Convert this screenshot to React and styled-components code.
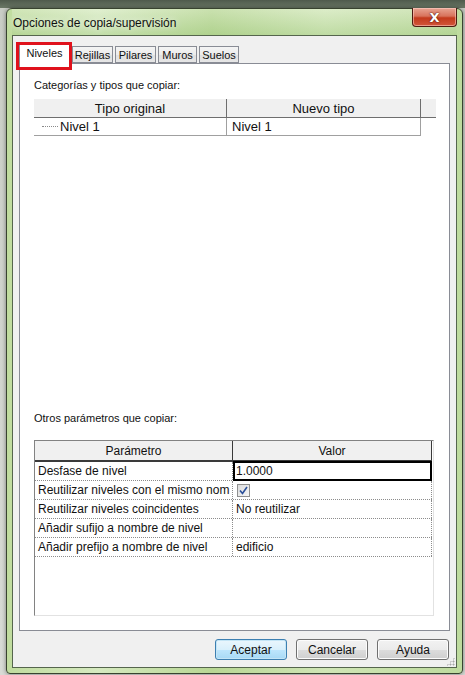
import React from 'react';
import styled, { createGlobalStyle } from 'styled-components';

const GlobalStyle = createGlobalStyle`
  html, body {
    margin: 0;
    padding: 0;
    height: 675px;
    overflow: hidden;
  }
  body {
    background: linear-gradient(180deg, #4f5a4c 0, #6b7866 8px, #c9cdc5 8px, #d8dbd5 100%);
    font-family: "Liberation Sans", Arial, sans-serif;
    font-size: 12px;
    color: #111;
  }
`;

const Page = styled.div`
  padding: 8px 2px 0 6px;
`;

const Window = styled.div`
  width: 457px;
  height: 666px;
  box-sizing: border-box;
  border: 1px solid #38432f;
  border-radius: 6px 6px 4px 4px;
  background: linear-gradient(90deg, #c0dc9e 0%, #d6eac0 20%, #b8d794 45%, #d0e6b6 70%, #bedb9e 100%);
  padding: 0 5px 5px 5px;
  display: flex;
  flex-direction: column;
  box-shadow: 0 0 4px rgba(0, 0, 0, 0.45);
`;

const TitleBar = styled.div`
  height: 26px;
  display: flex;
  justify-content: space-between;
  align-items: flex-start;
  background: linear-gradient(180deg, rgba(255,255,255,0.25) 0%, rgba(160,200,130,0.35) 100%);
`;

const Title = styled.div`
  margin: 7px 0 0 1px;
  font-size: 12px;
  color: #101010;
  text-shadow: 0 0 6px rgba(255,255,255,0.9);
`;

const CloseButton = styled.div`
  width: 45px;
  height: 19px;
  margin-top: -1px;
  box-sizing: border-box;
  border: 1px solid #4d1a10;
  border-top: none;
  border-radius: 0 0 4px 4px;
  background: linear-gradient(180deg, #e8a593 0%, #d8735c 45%, #c33a1c 55%, #d2553a 100%);
  box-shadow: inset 0 0 0 1px rgba(255, 210, 200, 0.55);
  display: flex;
  align-items: center;
  justify-content: center;
  color: #fff;
  font-family: "DejaVu Sans", sans-serif;
  font-weight: bold;
  font-size: 13px;
  text-shadow: 0 0 2px #5a1a0c, 0 0 1px #5a1a0c;
`;

const Client = styled.div`
  position: relative;
  flex: 1;
  border: 1px solid #55654d;
  background: #f0f0f0;
  padding: 7px 6px 7px 6px;
  display: flex;
  flex-direction: column;
`;

const TabRow = styled.div`
  height: 20px;
  display: flex;
  align-items: flex-end;
  gap: 2px;
`;

const Tab = styled.div`
  position: relative;
  box-sizing: border-box;
  width: ${({ w }) => w}px;
  height: ${({ active }) => (active ? 21 : 17)}px;
  margin-bottom: ${({ active }) => (active ? -1 : 0)}px;
  border: 1px solid #898c95;
  border-bottom: ${({ active }) => (active ? 'none' : '1px solid #898c95')};
  background: ${({ active }) =>
    active ? '#ffffff' : 'linear-gradient(180deg, #f4f4f4 0%, #ececec 50%, #dfdfdf 51%, #e6e6e6 100%)'};
  z-index: ${({ active }) => (active ? 2 : 1)};
  display: flex;
  align-items: ${({ active }) => (active ? 'flex-start' : 'center')};
  justify-content: center;
  padding-top: ${({ active }) => (active ? 3 : 0)}px;
  font-size: 11px;
  color: #111;
`;

const Highlight = styled.span`
  position: absolute;
  left: -4px;
  top: -2px;
  right: -3px;
  bottom: -6px;
  border: 3px solid #e0121c;
  pointer-events: none;
`;

const Panel = styled.div`
  height: 568px;
  box-sizing: border-box;
  border: 1px solid #898c95;
  background: #fff;
  padding: 14px 13px 14px 14px;
  display: flex;
  flex-direction: column;
`;

const Group = styled.div`
  flex: ${({ grow }) => (grow ? 1 : 'none')};
  display: flex;
  flex-direction: column;
`;

const Label = styled.div`
  height: 15px;
  line-height: 15px;
  font-size: 11px;
  margin-bottom: ${({ gap }) => gap}px;
`;

const TreeHeader = styled.div`
  display: flex;
  width: 402px;
  height: 19px;
  box-sizing: border-box;
  background: #f0f0f0;
  border-bottom: 1px solid #6e6e6e;
`;

const TreeHeadCell = styled.div`
  width: ${({ w }) => w}px;
  box-sizing: border-box;
  border-right: 1px solid ${({ last }) => (last ? 'transparent' : '#6e6e6e')};
  display: flex;
  align-items: center;
  justify-content: center;
  font-size: 13px;
`;

const TreeRow = styled.div`
  display: flex;
  width: 387px;
  height: 18px;
  box-sizing: border-box;
  border-bottom: 1px solid #a0a0a0;
  border-right: 1px solid #a0a0a0;
`;

const TreeCell = styled.div`
  width: ${({ w }) => w}px;
  box-sizing: border-box;
  border-right: ${({ divider }) => (divider ? '1px solid #a0a0a0' : 'none')};
  display: flex;
  align-items: center;
  padding-left: ${({ pad }) => pad}px;
  font-size: 13px;
`;

const Dots = styled.span`
  width: 16px;
  height: 0;
  border-top: 1px dotted #8a8a8a;
  margin-right: 2px;
`;

const Grid = styled.div`
  width: 400px;
  height: 176px;
  box-sizing: border-box;
  border: 1px solid;
  border-color: #828282 #e2e2e2 #e2e2e2 #828282;
  background: #fff;
  padding-right: 1px;
`;

const GridHeader = styled.div`
  display: flex;
  height: 21px;
  box-sizing: border-box;
  background: #f0f0f0;
  border-bottom: 2px solid #3a3a3a;
`;

const GridHeadCell = styled.div`
  width: ${({ w }) => w}px;
  box-sizing: border-box;
  border-right: 1px solid #3a3a3a;
  display: flex;
  align-items: center;
  justify-content: center;
  font-size: 12px;
`;

const GridRow = styled.div`
  display: flex;
  height: 19px;
  box-sizing: border-box;
  border-bottom: 1px dotted #8c8c8c;
`;

const GridCell = styled.div`
  width: ${({ w }) => w}px;
  box-sizing: border-box;
  border-right: 1px dotted #8c8c8c;
  display: flex;
  align-items: center;
  padding-left: 3px;
  font-size: 12px;
  ${({ selected }) =>
    selected &&
    `
    border: 2px solid #000;
    padding-left: 1px;
    margin-top: -1px;
    height: 20px;
  `}
`;

const Check = styled.span`
  width: 13px;
  height: 13px;
  box-sizing: border-box;
  border: 1px solid #8f8f8f;
  background: linear-gradient(135deg, #dcdcdc, #f6f6f6);
  display: flex;
  align-items: center;
  justify-content: center;
  margin-left: 1px;
`;

const ButtonRow = styled.div`
  margin-top: 8px;
  display: flex;
  justify-content: flex-end;
  gap: 9px;
  padding-right: 1px;
`;

const Button = styled.div`
  width: 72px;
  height: 21px;
  box-sizing: border-box;
  border: 1px solid ${({ primary }) => (primary ? '#3c7fb1' : '#707070')};
  border-radius: 3px;
  background: ${({ primary }) =>
    primary
      ? 'linear-gradient(180deg, #eaf6fd 0%, #d9f0fc 50%, #bee6fd 51%, #a7d9f5 100%)'
      : 'linear-gradient(180deg, #f2f2f2 0%, #ebebeb 50%, #dddddd 51%, #cfcfcf 100%)'};
  box-shadow: inset 0 0 0 1px ${({ primary }) => (primary ? '#c4e5f6' : '#fcfcfc')};
  display: flex;
  align-items: center;
  justify-content: center;
  font-size: 12px;
  color: #111;
`;

const Grip = styled.span`
  position: absolute;
  right: 1px;
  bottom: 1px;
  width: 9px;
  height: 9px;
  background-image: radial-gradient(circle, #a8a8a8 0.8px, transparent 1.2px);
  background-size: 3px 3px;
  clip-path: polygon(100% 0, 100% 100%, 0 100%);
`;

const tabs = [
  { name: 'Niveles', w: 51, active: true },
  { name: 'Rejillas', w: 41 },
  { name: 'Pilares', w: 41 },
  { name: 'Muros', w: 39 },
  { name: 'Suelos', w: 40 },
];

const params = [
  { name: 'Desfase de nivel', value: '1.0000', selected: true },
  { name: 'Reutilizar niveles con el mismo nom', check: true },
  { name: 'Reutilizar niveles coincidentes', value: 'No reutilizar' },
  { name: 'Añadir sufijo a nombre de nivel', value: '' },
  { name: 'Añadir prefijo a nombre de nivel', value: 'edificio' },
];

export default function App() {
  return (
    <>
      <GlobalStyle />
      <Page>
        <Window>
          <TitleBar>
            <Title>Opciones de copia/supervisión</Title>
            <CloseButton>X</CloseButton>
          </TitleBar>
          <Client>
            <TabRow>
              {tabs.map((t) => (
                <Tab key={t.name} w={t.w} active={t.active}>
                  {t.name}
                  {t.active && <Highlight />}
                </Tab>
              ))}
            </TabRow>
            <Panel>
              <Group grow>
                <Label gap={6}>Categorías y tipos que copiar:</Label>
                <TreeHeader>
                  <TreeHeadCell w={193}>Tipo original</TreeHeadCell>
                  <TreeHeadCell w={194}>Nuevo tipo</TreeHeadCell>
                  <TreeHeadCell w={15} last />
                </TreeHeader>
                <TreeRow>
                  <TreeCell w={193} pad={8} divider>
                    <Dots />
                    Nivel 1
                  </TreeCell>
                  <TreeCell w={193} pad={5}>Nivel 1</TreeCell>
                </TreeRow>
              </Group>
              <Group>
                <Label gap={14}>Otros parámetros que copiar:</Label>
                <Grid>
                  <GridHeader>
                    <GridHeadCell w={198}>Parámetro</GridHeadCell>
                    <GridHeadCell w={199}>Valor</GridHeadCell>
                  </GridHeader>
                  {params.map((p) => (
                    <GridRow key={p.name}>
                      <GridCell w={198}>{p.name}</GridCell>
                      <GridCell w={199} selected={p.selected}>
                        {p.check ? (
                          <Check>
                            <svg width="9" height="9" viewBox="0 0 9 9">
                              <path d="M1 4.5 L3.5 7.5 L8 1" fill="none" stroke="#2a4f9a" strokeWidth="1.6" />
                            </svg>
                          </Check>
                        ) : (
                          p.value
                        )}
                      </GridCell>
                    </GridRow>
                  ))}
                </Grid>
              </Group>
            </Panel>
            <ButtonRow>
              <Button primary>Aceptar</Button>
              <Button>Cancelar</Button>
              <Button>Ayuda</Button>
            </ButtonRow>
            <Grip />
          </Client>
        </Window>
      </Page>
    </>
  );
}
